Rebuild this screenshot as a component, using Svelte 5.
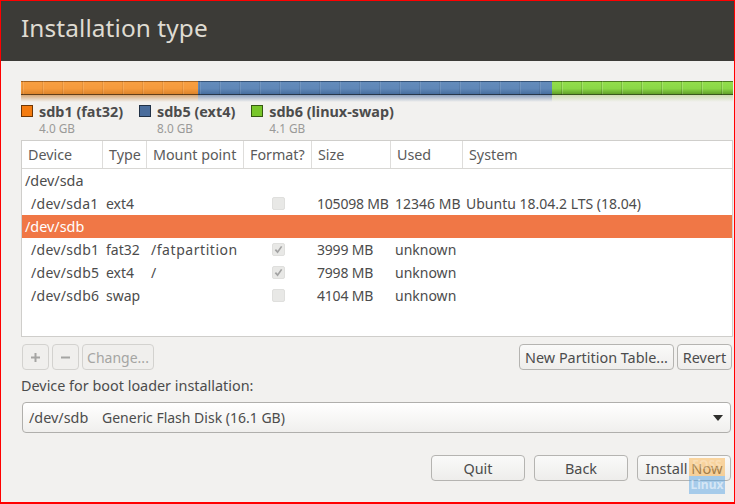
<script>
  const legend = [
    { name: 'sdb1 (fat32)', size: '4.0 GB', cls: 'orange' },
    { name: 'sdb5 (ext4)', size: '8.0 GB', cls: 'blue' },
    { name: 'sdb6 (linux-swap)', size: '4.1 GB', cls: 'green' }
  ];
  const heads = ['Device', 'Type', 'Mount point', 'Format?', 'Size', 'Used', 'System'];
  const rows = [
    { dev: '/dev/sda', top: true },
    { dev: '/dev/sda1', type: 'ext4', mount: '', check: 'off', size: '105098 MB', used: '12346 MB', system: 'Ubuntu 18.04.2 LTS (18.04)' },
    { dev: '/dev/sdb', top: true, selected: true },
    { dev: '/dev/sdb1', type: 'fat32', mount: '/fatpartition', check: 'on', size: '3999 MB', used: 'unknown', system: '' },
    { dev: '/dev/sdb5', type: 'ext4', mount: '/', check: 'on', size: '7998 MB', used: 'unknown', system: '' },
    { dev: '/dev/sdb6', type: 'swap', mount: '', check: 'off', size: '4104 MB', used: 'unknown', system: '' }
  ];
</script>

<div class="window">
  <header class="title"><h1>Installation type</h1></header>
  <main class="content">
    <div class="bar">
      <div class="seg orange s1"></div>
      <div class="seg blue s2"></div>
      <div class="seg green s3"></div>
    </div>
    <div class="legend">
      {#each legend as l}
        <div class="item">
          <span class="swatch {l.cls}"></span>
          <div>
            <div class="lname">{l.name}</div>
            <div class="lsize">{l.size}</div>
          </div>
        </div>
      {/each}
    </div>

    <div class="table">
      <div class="row head">
        {#each heads as h}<div class="th">{h}</div>{/each}
      </div>
      <div class="body">
        {#each rows as r}
          <div class="row" class:selected={r.selected}>
            {#if r.top}
              <div class="topdev">{r.dev}</div>
            {:else}
              <div class="c dev">{r.dev}</div>
              <div class="c">{r.type}</div>
              <div class="c mount">{r.mount}</div>
              <div class="c chk">
                <span class="box">
                  {#if r.check === 'on'}
                    <svg viewBox="0 0 13 13" width="13" height="13"><path d="M2.8 6.6 5.4 9.6 10.2 2.8" fill="none" stroke="#a3a3a3" stroke-width="2"/></svg>
                  {/if}
                </span>
              </div>
              <div class="c size">{r.size}</div>
              <div class="c used">{r.used}</div>
              <div class="c sys">{r.system}</div>
            {/if}
          </div>
        {/each}
      </div>
    </div>

    <div class="tools">
      <div class="group">
        <button class="btn dis sq"><svg viewBox="0 0 11 11" width="11" height="11"><path d="M5.5 1v9M1 5.5h9" stroke="#a5a5a3" stroke-width="2"/></svg></button>
        <button class="btn dis sq"><svg viewBox="0 0 11 11" width="11" height="11"><path d="M1 5.5h9" stroke="#a5a5a3" stroke-width="2"/></svg></button>
        <button class="btn dis change">Change...</button>
      </div>
      <div class="group">
        <button class="btn npt">New Partition Table...</button>
        <button class="btn revert">Revert</button>
      </div>
    </div>

    <div class="bootlabel">Device for boot loader installation:</div>
    <div class="combo">
      <span class="combotext"><span class="cdev">/dev/sdb</span><span>Generic Flash Disk (16.1 GB)</span></span>
      <svg viewBox="0 0 10 6" width="10" height="6"><path d="M0 0h10L5 6z" fill="#2f2f2d"/></svg>
    </div>

    <div class="actions">
      <button class="btn act">Quit</button>
      <button class="btn act">Back</button>
      <button class="btn act wide">Install Now</button>
    </div>
  </main>
  <div class="mark"><div class="mo">FOSS</div><div class="mb">Linux</div></div>
</div>

<style>
  :global(body) { margin: 0; background: #f2f1ef; }
  .window {
    position: relative;
    box-sizing: border-box;
    width: 735px;
    height: 504px;
    border: 1px solid #f00;
    border-bottom-width: 2px;
    background: #f2f1ef;
    font-family: "Noto Sans", sans-serif;
    color: #4c4c4c;
    font-size: 14px;
    overflow: hidden;
  }
  .title {
    height: 60px;
    background: #3c3b37;
    display: flex;
    align-items: center;
    padding: 0 0 7px 20px;
    box-sizing: border-box;
  }
  h1 { margin: 0; font-size: 24.4px; font-weight: 400; color: #dfdbd2; letter-spacing: 0.1px; }
  .content { padding: 20px 0 0 20px; }
  .bar { display: flex; width: 712px; height: 14px; }
  .seg { position: relative; height: 14px; box-sizing: border-box; border-top: 1px solid rgba(0,0,0,.25); border-bottom: 1px solid rgba(0,0,0,.6); }
  .seg::after { content: ""; position: absolute; left: 0; right: 0; top: 13px; height: 7px; }
  .s1 { width: 177px; }
  .s2 { width: 354px; }
  .s3 { width: 181px; }
  .seg.orange { background-image: linear-gradient(90deg, rgba(0,0,0,.07) 1px, rgba(255,255,255,.12) 1px 2px, transparent 2px), linear-gradient(#f79f42, #f59a3c 55%, #dd842b); background-size: 20px 100%, 100% 100%; background-position: 1px 0, 0 0; }
  .seg.blue { background-image: linear-gradient(90deg, rgba(0,0,0,.08) 1px, rgba(255,255,255,.1) 1px 2px, transparent 2px), linear-gradient(#648cbb, #5f87b7 55%, #466e9f); background-size: 20px 100%, 100% 100%; background-position: 1px 0, 0 0; }
  .seg.green { background-image: linear-gradient(90deg, rgba(0,0,0,.14) 1px, rgba(255,255,255,.18) 1px 2px, transparent 2px), linear-gradient(#92de4c, #8ad746 55%, #62a12a); background-size: 20px 100%, 100% 100%; background-position: 9px 0, 0 0; }
  .seg.orange::after { background: linear-gradient(#d6a878, #f2f1ef); }
  .seg.blue::after { background: linear-gradient(#8ea2be, #f2f1ef); }
  .seg.green::after { background: linear-gradient(#cfdcb4, #f2f1ef); }
  .legend { display: flex; margin-top: 10px; height: 36px; }
  .item { display: flex; gap: 6px; margin-right: 16px; }
  .swatch { width: 12px; height: 12px; box-sizing: border-box; border: 1px solid rgba(0,0,0,.55); }
  .swatch.orange { background: #f47b0f; }
  .swatch.blue { background: #4a6d9c; }
  .swatch.green { background: #78c62a; }
  .lname { font-weight: 700; font-size: 14.4px; line-height: 14px; color: #4c4c4c; }
  .lsize { font-size: 11.8px; line-height: 16px; margin-top: 1px; color: #9a9a98; }
  .table { width: 712px; height: 197px; box-sizing: border-box; background: #fff; border: 1px solid #cfcecb; margin-top: -1px; }
  .row { display: grid; grid-template-columns: 81px 44px 97px 68px 79px 72px 1fr; height: 23px; align-items: center; white-space: nowrap; font-size: 14px; }
  .row.head { height: 27px; border-bottom: 1px solid #d8d7d4; }
  .th { height: 100%; line-height: 27px; padding-left: 6px; border-right: 1px solid #dedddb; box-sizing: border-box; color: #5a5a5a; font-size: 14.3px; }
  .th:last-child { border-right: 0; }
  .topdev { grid-column: 1 / -1; padding-left: 3px; font-size: 14.4px; }
  .selected { background: #f07746; color: #fff; }
  .c { padding-left: 3px; }
  .dev { padding-left: 9px; letter-spacing: 0.3px; }
  .mount { padding-left: 4px; letter-spacing: 0.55px; }
  .chk { display: flex; justify-content: center; padding: 0; }
  .box { width: 13px; height: 13px; border-radius: 2px; background: #e8e8e6; border: 1px solid #dfdfdd; box-sizing: border-box; display: flex; align-items: center; justify-content: center; }
  .size { padding-left: 5px; letter-spacing: -0.2px; }
  .used { padding-left: 4px; }
  .sys { padding-left: 3px; }
  .tools { display: flex; justify-content: space-between; width: 710px; margin: 7px 0 0 1px; }
  .group { display: flex; gap: 3px; }
  .btn { box-sizing: border-box; height: 26px; font: inherit; font-size: 14.4px; color: #4c4c4c; background: linear-gradient(#fafaf9, #eeedeb); border: 1px solid #b5b4b1; border-radius: 4px; padding: 0; display: flex; align-items: center; justify-content: center; }
  .dis { color: #a5a5a3; background: #f0efed; border-color: #d3d2cf; }
  .sq { width: 27px; }
  .change { width: 72px; font-size: 14px; }
  .npt { width: 155px; }
  .revert { width: 55px; }
  .bootlabel { margin-top: 7px; height: 18px; line-height: 18px; font-size: 14.4px; }
  .combo { box-sizing: border-box; width: 709px; height: 31px; margin: 7px 0 0 1px; border: 1px solid #b0afac; border-radius: 4px; background: linear-gradient(#fff, #f0efed); display: flex; align-items: center; justify-content: space-between; padding: 0 7px 0 6px; }
  .combotext { display: flex; }
  .cdev { width: 73px; font-size: 14.4px; }
  .actions { display: flex; justify-content: flex-end; gap: 9px; width: 710px; margin-top: 22px; }
  .act { width: 94px; }
  .wide { font-size: 14.6px; }
  .mark { position: absolute; left: 688px; top: 457px; width: 36px; text-align: center; font-weight: 700; font-size: 12px; color: rgba(255,255,255,.55); }
  .mo { height: 18px; line-height: 14px; background: rgba(250,175,70,.5); color: rgba(255,255,255,.25); }
  .mb { height: 18px; line-height: 18px; background: rgba(90,165,230,.5); }
</style>
